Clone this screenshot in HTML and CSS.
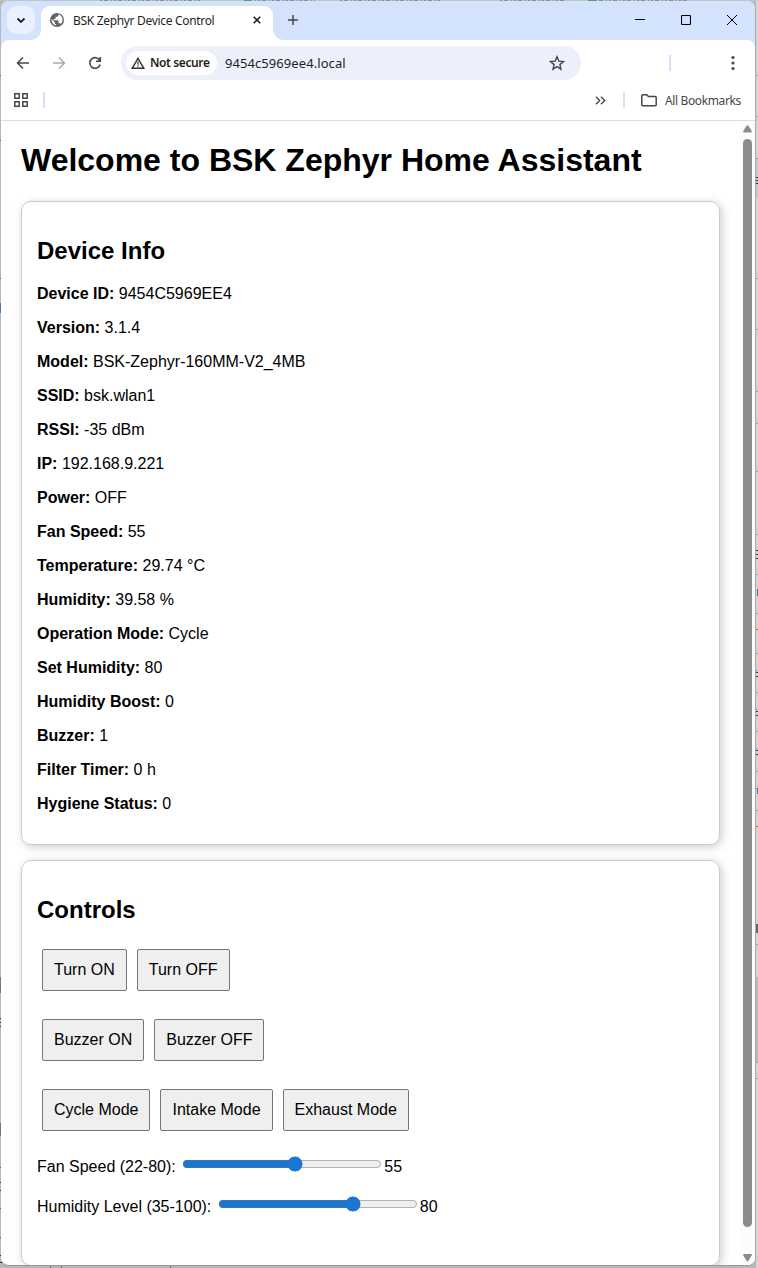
FILE: index.html
```html
<!DOCTYPE html>
<html lang="en">
<head>
<meta charset="utf-8">
<title>BSK Zephyr Device Control</title>
<link rel="stylesheet" href="styles.css">
</head>
<body>
<svg class="backdrop" width="758" height="1268" viewBox="0 0 758 1268" shape-rendering="crispEdges">
  <rect width="758" height="1268" fill="#b8b8b8"/>
  <rect x="756" width="2" height="1268" fill="#d4d4d4"/>
  <path d="M0 .5H758" stroke="#c2c3c5"/>
  <path d="M100 .5H200M244 .5H315M340 .5H440M500 .5H565M595 .5H690" stroke="#8c8e91" stroke-dasharray="2 2 4 3 1 2"/>
  <path d="M588 .5h8M245 .5h6" stroke="#5a9a68"/>
  <path d="M756 75.500h2M756 116.500h2M756 158.500h2M756 278.500h2M756 329.500h2M756 391.500h2M756 423.500h2M756 471.500h2M756 534.500h2M756 574.500h2M756 613.500h2M756 653.500h2M756 692.500h2M756 731.500h2M756 771.500h2M756 810.500h2M756 944.500h2M756 1062.500h2M756 1078.500h2" stroke="#a4a4a8"/>
  <path d="M756 159h2v38h-2z" fill="#c4c7cc"/>
  <path d="M756 977h2v85h-2z" fill="#b9b9b9"/>
  <path d="M755 924h3v9h-3z" fill="#686868"/>
  <path d="M756 177.500h2M756 180.500h2M756 183.500h2M755 550.500h3M756 554.500h2M755 558.500h3M756 672.500h2M756 676.500h2M756 711.500h2M756 715.500h2M756 750.500h2M756 754.500h2" fill="none" stroke="#35373b"/>
  <path d="M757.500 589v7M756 670.500h1M756 709.500h1M756 748.500h1M757.500 788v6" stroke="#3975bc"/>
  <path d="M756 629.500h2M756 788.500h1M756 826.500h2" stroke="#b07931"/>
  <path d="M0 977h1v16H0zM0 1123h1v13H0z" fill="#777"/>
  <path d="M0 1018.500h1M0 1022.500h1M0 1026.500h1M0 1182.500h1M0 1190.500h1M0 1255.500h3M0 1262.500h3" stroke="#333"/>
  <path d="M0 75.500h1M0 140.500h1M0 278.500h1M0 1167.500h1M0 1208.500h1M0 1237.500h1M50.500 1266v2M61.500 1266v2M170.500 1266v2" stroke="#666"/>
  <path d="M0 303h1v10H0z" fill="#4a78b2"/>
</svg>
<div class="window">
  <header class="tabs">
    <div class="tab-search">
      <svg width="10" height="7" viewBox="0 0 10 7"><path d="M1.500 1.500 5 5l3.500-3.500" fill="none" stroke="#202124" stroke-width="1.800"/></svg>
    </div>
    <div class="tab">
      <svg width="16" height="16" viewBox="0 0 16 16">
        <circle cx="8" cy="8" r="7" fill="#5f6368"/>
        <path d="M9.300 2.300v1.100c0 .8-.6 1.400-1.400 1.400H6.600v1.400c0 .4-.3.700-.7.700H4.600v1.300h4.200c.4 0 .7.300.7.700v2.200h.8c.6 0 1.100.4 1.300.9A5.600 5.600 0 0 0 9.300 2.300zM2.600 6.900A5.600 5.600 0 0 0 7.200 13.500v-1.100c-.8 0-1.400-.6-1.400-1.400v-.8z" fill="#fff"/>
      </svg>
      <span class="tab-title">BSK Zephyr Device Control</span>
      <svg class="tab-close" width="8" height="8" viewBox="0 0 8 8"><path d="m.7.7 6.600 6.600m0-6.600L.7 7.300" stroke="#202124" stroke-width="1.600"/></svg>
    </div>
    <svg class="new-tab" width="12" height="12" viewBox="0 0 12 12"><path d="M6 1v10M1 6h10" stroke="#474747" stroke-width="1.500"/></svg>
    <div class="window-buttons">
      <svg width="10" height="10" viewBox="0 0 10 10"><path d="M0 4.500h10" stroke="#000"/></svg>
      <svg width="10" height="10" viewBox="0 0 10 10"><rect x=".5" y=".5" width="9" height="9" rx="1" fill="none" stroke="#000" stroke-width="1.100"/></svg>
      <svg width="10" height="10" viewBox="0 0 10 10"><path d="m0 0 10 10M10 0 0 10" stroke="#000"/></svg>
    </div>
  </header>
  <div class="toolbar-wrap">
  <div class="toolbar">
    <div class="nav">
      <svg width="14" height="14" viewBox="0 0 14 14"><path d="M13 7H2M7 1.500 1.500 7 7 12.500" fill="none" stroke="#474747" stroke-width="1.500"/></svg>
      <svg width="14" height="14" viewBox="0 0 14 14"><path d="M1 7h11M7 1.500 12.500 7 7 12.500" fill="none" stroke="#ababab" stroke-width="1.500"/></svg>
      <svg width="14" height="14" viewBox="0 0 14 14"><path d="M11.800 4.500A5.300 5.300 0 1 0 12.200 8.500M12.300 1v4.200H8" fill="none" stroke="#474747" stroke-width="1.600"/></svg>
    </div>
    <div class="omnibox">
      <div class="chip">
        <svg width="14" height="12" viewBox="0 0 14 12"><path d="M7 1.300 12.800 11.300H1.200z" fill="none" stroke="#333" stroke-width="1.400"/><path d="M7 4.500v3.200M7 8.500v1.300" stroke="#333" stroke-width="1.200"/></svg>
        <span>Not secure</span>
      </div>
      <span class="url">9454c5969ee4.local</span>
      <svg class="star" width="16" height="16" viewBox="0 0 16 16"><path d="m8 1.800 1.800 4.300 4.700.4-3.600 3.100 1.100 4.600L8 11.700l-4 2.500 1.100-4.600L1.500 6.500l4.700-.4z" fill="none" stroke="#474747" stroke-width="1.400"/></svg>
    </div>
    <span class="divider tool-divider"></span>
    <svg class="menu" width="4" height="16" viewBox="0 0 4 16" fill="#474747"><circle cx="2" cy="2.500" r="1.600"/><circle cx="2" cy="8" r="1.600"/><circle cx="2" cy="13.500" r="1.600"/></svg>
  </div>
  <div class="bookmarks">
    <svg width="14" height="14" viewBox="0 0 14 14"><path d="M.8.8h4.400v4.400H.8zM8.800.8h4.400v4.400H8.800zM.8 8.800h4.400v4.400H.8zM8.800 8.800h4.400v4.400H8.800z" fill="none" stroke="#474747" stroke-width="1.500"/></svg>
    <span class="divider first-divider"></span>
    <svg class="more" width="11" height="9" viewBox="0 0 11 9"><path d="m1 .8 3.700 3.700L1 8.200M6 .8l3.700 3.700L6 8.200" fill="none" stroke="#474747" stroke-width="1.400"/></svg>
    <span class="divider last-divider"></span>
    <svg class="folder" width="16" height="13" viewBox="0 0 16 13"><path d="M.8 10.800v-9q0-1 1-1h4l1.600 1.700h6.800q1 0 1 1v7.300q0 1-1 1H1.800q-1 0-1-1z" fill="none" stroke="#474747" stroke-width="1.500"/></svg>
    <span class="all">All Bookmarks</span>
  </div>
  </div>
  <div class="viewport">
    <main class="page">
      <h1>Welcome to BSK Zephyr Home Assistant</h1>
      <section class="card">
        <h2>Device Info</h2>
        <p><b>Device ID:</b> 9454C5969EE4</p>
        <p><b>Version:</b> 3.1.4</p>
        <p><b>Model:</b> BSK-Zephyr-160MM-V2_4MB</p>
        <p><b>SSID:</b> bsk.wlan1</p>
        <p><b>RSSI:</b> -35 dBm</p>
        <p><b>IP:</b> 192.168.9.221</p>
        <p><b>Power:</b> OFF</p>
        <p><b>Fan Speed:</b> 55</p>
        <p><b>Temperature:</b> 29.74 °C</p>
        <p><b>Humidity:</b> 39.58 %</p>
        <p><b>Operation Mode:</b> Cycle</p>
        <p><b>Set Humidity:</b> 80</p>
        <p><b>Humidity Boost:</b> 0</p>
        <p><b>Buzzer:</b> 1</p>
        <p><b>Filter Timer:</b> 0 h</p>
        <p><b>Hygiene Status:</b> 0</p>
      </section>
      <section class="card controls">
        <h2>Controls</h2>
        <div class="row"><button>Turn ON</button><button>Turn OFF</button></div>
        <div class="row"><button>Buzzer ON</button><button>Buzzer OFF</button></div>
        <div class="row"><button>Cycle Mode</button><button>Intake Mode</button><button>Exhaust Mode</button></div>
        <div class="sliders">
          <div class="slider"><label for="fan">Fan Speed (22-80):</label><input id="fan" type="range" min="22" max="80" value="55"><span>55</span></div>
          <div class="slider"><label for="hum">Humidity Level (35-100):</label><input id="hum" type="range" min="35" max="100" value="80"><span>80</span></div>
        </div>
      </section>
    </main>
    <div class="scrollbar">
      <svg width="9" height="8" viewBox="0 0 9 8"><path d="M3.500.8q1-1.200 2 0L8.700 6q.6 1.500-.8 1.500H1.100Q-.3 7.500.3 6z" fill="#8b8b8b"/></svg>
      <div class="thumb"></div>
      <svg width="9" height="8" viewBox="0 0 9 8"><path d="M3.500 6.700q1 1.200 2 0L8.700 1.500Q9.300 0 7.900 0H1.100Q-.3 0 .3 1.500z" fill="#8b8b8b"/></svg>
    </div>
  </div>
</div>
</body>
</html>
```
FILE: styles.css
```css
* { box-sizing: border-box; }
body {
  margin: 0;
  width: 758px;
  height: 1268px;
  overflow: hidden;
  position: relative;
  font-family: "Liberation Sans", Arial, sans-serif;
  color: #000;
}
.backdrop { position: absolute; left: 0; top: 0; }
.window {
  position: relative;
  width: 755px;
  height: 1265px;
  margin: 1px 0 0 1px;
  display: flex;
  flex-direction: column;
  background: #fff;
  border-radius: 8px;
  overflow: hidden;
  border-right: 1px solid #aaa;
  border-bottom: 1px solid #999;
}
.tabs, .toolbar-wrap { font-family: "Noto Sans", sans-serif; }
.tabs {
  height: 39px;
  flex: none;
  display: flex;
  align-items: flex-start;
  background: #d3e3fd;
}
.tab-search {
  width: 28px;
  height: 28px;
  margin: 5px 0 0 6px;
  border-radius: 9px;
  background: #e9f1fe;
  display: flex;
  align-items: center;
  justify-content: center;
}
.tab {
  position: relative;
  width: 232px;
  height: 34px;
  margin: 5px 0 0 6px;
  padding: 0 12px 6px 8px;
  display: flex;
  align-items: center;
  background: #fff;
  border-radius: 9px 9px 0 0;
}
.tab::before, .tab::after {
  content: "";
  position: absolute;
  bottom: 0;
  width: 10px;
  height: 10px;
}
.tab::before { left: -10px; background: radial-gradient(circle at 0 0, #d3e3fd 9.500px, #fff 10px); }
.tab::after { right: -10px; background: radial-gradient(circle at 100% 0, #d3e3fd 9.500px, #fff 10px); }
.tab-title { margin-left: 8px; font-size: 12px; letter-spacing: -.32px; color: #1f1f1f; white-space: nowrap; }
.tab-close { margin-left: auto; }
.new-tab { margin: 13px 0 0 14px; }
.window-buttons { display: flex; gap: 36px; margin: 14px 18px 0 auto; }
.toolbar-wrap { height: 81px; flex: none; background: linear-gradient(#d3e3fd 10px, #fff 10px); }
.toolbar {
  height: 46px;
  display: flex;
  align-items: center;
  background: #fff;
  border-radius: 8px 8px 0 0;
}
.nav { display: flex; gap: 22px; margin-left: 15px; }
.omnibox {
  width: 460px;
  height: 34px;
  margin-left: 19px;
  padding: 0 16px 0 5px;
  display: flex;
  align-items: center;
  border-radius: 17px;
  background: #ecf0fa;
}
.chip {
  width: 91px;
  height: 24px;
  display: flex;
  align-items: center;
  gap: 5px;
  padding: 0 0 1px 5px;
  border-radius: 12px;
  background: #fff;
  font-size: 12px;
  font-weight: 600;
  letter-spacing: -.4px;
  color: #1f1f1f;
  white-space: nowrap;
}
.url { margin-left: 8px; font-size: 13px; letter-spacing: .07px; color: #1f1f1f; }
.star { margin-left: auto; }
.divider { width: 2px; height: 16px; background: #d3e3fd; }
.tool-divider { margin-left: 88px; }
.menu { margin-left: 60px; }
.bookmarks {
  height: 35px;
  padding: 0 14px 6px 13px;
  display: flex;
  align-items: center;
  background: #fff;
  border-bottom: 1px solid #dedede;
}
.first-divider { margin-left: 15px; }
.more { margin-left: auto; }
.last-divider { margin-left: 17px; }
.folder { margin-left: 16px; }
.all { margin-left: 8px; font-size: 12px; letter-spacing: -.36px; color: #474747; }
.viewport { flex: 1; min-height: 0; display: flex; }
.page { width: 739px; padding: 0 20px; overflow: hidden; }
h1 { margin: 21px 0 22px; font-size: 32px; line-height: 37px; white-space: nowrap; }
h2 { margin: 20px 0; font-size: 24px; line-height: 27px; }
.card {
  height: 644px;
  margin-bottom: 15px;
  padding: 15px;
  display: flow-root;
  border: 1px solid #ccc;
  border-radius: 10px;
  box-shadow: 2px 2px 10px rgba(0, 0, 0, .2);
}
.controls { height: 406px; margin-bottom: 0; }
p { margin: 16px 0; line-height: 18px; font-size: 16px; }
h2 + p { margin-top: 21px; }
.row { display: flex; gap: 10px; padding: 6px 5px 5px; margin-bottom: 17px; }
.controls h2 { margin-bottom: 20px; }
button {
  height: 42px;
  padding: 0 11px;
  border: 1px solid #767676;
  border-radius: 2px;
  background: #efefef;
  font: 16px "Liberation Sans", Arial, sans-serif;
  color: #000;
}
.sliders { padding-top: 4px; }
.slider { height: 40px; display: flex; line-height: 20px; font-size: 16px; }
input {
  width: 200px;
  height: 16px;
  margin: -1px 2px 0 6.500px;
  accent-color: #1976d2;
}
.scrollbar {
  width: 15px;
  padding: 4px 3px 3px;
  display: flex;
  flex-direction: column;
  align-items: center;
  background: #fcfcfc;
}
.thumb { width: 9px; height: 1088px; margin: 6px 0 auto; border-radius: 5px; background: #8b8b8b; }
```
